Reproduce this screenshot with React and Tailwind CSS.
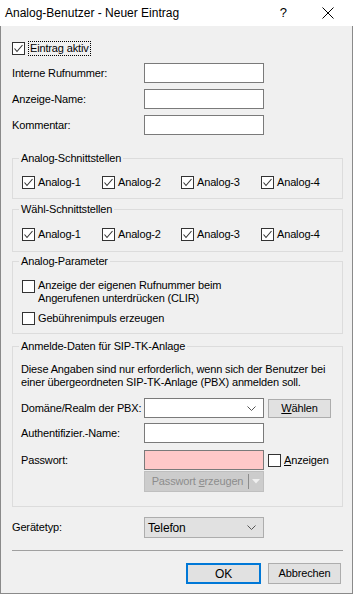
import React from 'react';

const font = { fontFamily: '"Liberation Sans", Arial, sans-serif' };

const Check = ({ checked }) => (
  <span className="w-[13px] h-[13px] border border-[#333333] bg-white flex items-center justify-center shrink-0">
    {checked && (
      <svg width="11" height="11" viewBox="0 0 11 11">
        <path d="M1.5 5.5 L4 8.5 L9.5 2" stroke="#333333" strokeWidth="1.1" fill="none" />
      </svg>
    )}
  </span>
);

const CheckItem = ({ label, checked = true, width }) => (
  <div className={`flex items-center h-[13px] ${width}`}>
    <Check checked={checked} />
    <span className="ml-[3px] leading-[13px] whitespace-nowrap">{label}</span>
  </div>
);

const Chevron = () => (
  <svg width="9" height="5" viewBox="0 0 9 5">
    <path d="M0.5 0.5 L4.5 4.5 L8.5 0.5" stroke="#555555" strokeWidth="1" fill="none" />
  </svg>
);

const Input = ({ pink }) => (
  <div className={`w-[120px] h-[20px] shrink-0 border border-[#7a7a7a] ${pink ? 'bg-[#ffc8c8]' : 'bg-white'}`} />
);

const Group = ({ title, children, className }) => (
  <fieldset className={`border border-[#dcdcdc] px-0 m-0 min-w-0 ${className}`}>
    <legend className="ml-[6px] px-[2px] leading-[13px]">{title}</legend>
    {children}
  </fieldset>
);

const App = () => {
  const ports = [
    ['Analog-1', 'w-[80px]'],
    ['Analog-2', 'w-[79px]'],
    ['Analog-3', 'w-[80px]'],
    ['Analog-4', 'w-[70px]'],
  ];

  return (
    <div className="w-[353px] h-[594px] flex flex-col text-[11px] text-black tracking-[-0.15px]" style={font}>
      {/* Title bar */}
      <div className="h-[26px] bg-white flex items-center shrink-0 tracking-normal">
        <span className="pl-[5px] text-[12px] flex-1">Analog-Benutzer - Neuer Eintrag</span>
        <span className="text-[13px] mr-[35px]">?</span>
        <svg width="12" height="12" viewBox="0 0 12 12" className="mr-[19px]">
          <path d="M0.5 0.5 L11.5 11.5 M11.5 0.5 L0.5 11.5" stroke="#000" strokeWidth="1" />
        </svg>
      </div>

      {/* Body */}
      <div className="flex-1 bg-[#f0f0f0] border-x border-b border-[#8a8a8a] pl-[11px] pr-[9px] flex flex-col">
        <div className="mt-[15px] flex items-center h-[15px]">
          <Check checked />
          <span className="ml-[3px] px-[1px] border border-dotted border-black leading-[13px]">Eintrag aktiv</span>
        </div>

        <div className="mt-[7px] flex flex-col gap-[6px]">
          {['Interne Rufnummer:', 'Anzeige-Name:', 'Kommentar:'].map((l) => (
            <div key={l} className="flex items-center h-[20px]">
              <span className="w-[132px] shrink-0 whitespace-nowrap">{l}</span>
              <Input />
            </div>
          ))}
        </div>

        <Group title="Analog-Schnittstellen" className="mt-[17px]">
          <div className="flex pl-[9px] pt-[11px] pb-[9px]">
            {ports.map(([l, w]) => (
              <CheckItem key={l} label={l} width={w} />
            ))}
          </div>
        </Group>

        <Group title="Wähl-Schnittstellen" className="mt-[4px]">
          <div className="flex pl-[9px] pt-[12px] pb-[10px]">
            {ports.map(([l, w]) => (
              <CheckItem key={l} label={l} width={w} />
            ))}
          </div>
        </Group>

        <Group title="Analog-Parameter" className="mt-[3px]">
          <div className="flex flex-col pl-[9px] pt-[12px] pb-[8px]">
            <div className="flex items-start">
              <Check />
              <span className="ml-[3px] leading-[13px] -mt-[1px]">
                Anzeige der eigenen Rufnummer beim
                <br />
                Angerufenen unterdrücken (CLIR)
              </span>
            </div>
            <div className="mt-[7px]">
              <CheckItem label="Gebührenimpuls erzeugen" checked={false} />
            </div>
          </div>
        </Group>

        <Group title="Anmelde-Daten für SIP-TK-Anlage" className="mt-[6px]">
          <div className="flex flex-col pl-[8px] pt-[10px] pb-[14px]">
            <p className="leading-[13px] whitespace-nowrap">
              Diese Angaben sind nur erforderlich, wenn sich der Benutzer bei
              <br />
              einer übergeordneten SIP-TK-Anlage (PBX) anmelden soll.
            </p>
            <div className="mt-[9px] flex items-center h-[20px]">
              <span className="w-[123px] shrink-0 whitespace-nowrap">Domäne/Realm der PBX:</span>
              <div className="w-[120px] h-[20px] shrink-0 border border-[#7a7a7a] bg-white flex items-center justify-end pr-[7px]">
                <Chevron />
              </div>
              <button className="ml-[4px] w-[63px] h-[19px] shrink-0 bg-[#e1e1e1] border border-[#adadad] flex items-center justify-center">
                <span><u>W</u>ählen</span>
              </button>
            </div>
            <div className="mt-[5px] flex items-center h-[20px]">
              <span className="w-[123px] shrink-0 whitespace-nowrap">Authentifizier.-Name:</span>
              <Input />
            </div>
            <div className="mt-[7px] flex items-center h-[20px]">
              <span className="w-[123px] shrink-0">Passwort:</span>
              <Input pink />
              <div className="ml-[4px] flex items-center">
                <Check />
                <span className="ml-[3px]"><u>A</u>nzeigen</span>
              </div>
            </div>
            <div className="mt-[1px] flex h-[21px]">
              <span className="w-[123px] shrink-0" />
              <div className="w-[120px] h-[21px] shrink-0 bg-[#cccccc] border border-[#bfbfbf] flex items-center text-[#8c8c8c]">
                <span className="flex-1 text-center pl-[2px] whitespace-nowrap">
                  Passwort <u>e</u>rzeugen
                </span>
                <span className="w-[1px] h-[15px] bg-[#8c8c8c]" />
                <span className="w-[14px] flex justify-center">
                  <svg width="8" height="5" viewBox="0 0 8 5">
                    <path d="M0 0 L8 0 L4 4.5 Z" fill="#f0f0f0" />
                  </svg>
                </span>
              </div>
            </div>
          </div>
        </Group>

        <div className="mt-[10px] flex items-center h-[21px]">
          <span className="w-[132px] shrink-0">Gerätetyp:</span>
          <div className="w-[120px] h-[21px] shrink-0 bg-[#e1e1e1] border border-[#adadad] flex items-center pl-[3px] pr-[7px]">
            <span className="flex-1 text-[12px]">Telefon</span>
            <Chevron />
          </div>
        </div>

        <div className="mt-[12px] h-[1px] bg-[#a0a0a0]" />

        <div className="mt-[12px] flex justify-end pr-[2px] gap-[7px]">
          <button className="w-[75px] h-[21px] bg-[#e1e1e1] border-2 border-[#0078d7] text-[12px]">OK</button>
          <button className="w-[73px] h-[21px] bg-[#e1e1e1] border border-[#adadad]">Abbrechen</button>
        </div>
      </div>
    </div>
  );
};

export default App;
